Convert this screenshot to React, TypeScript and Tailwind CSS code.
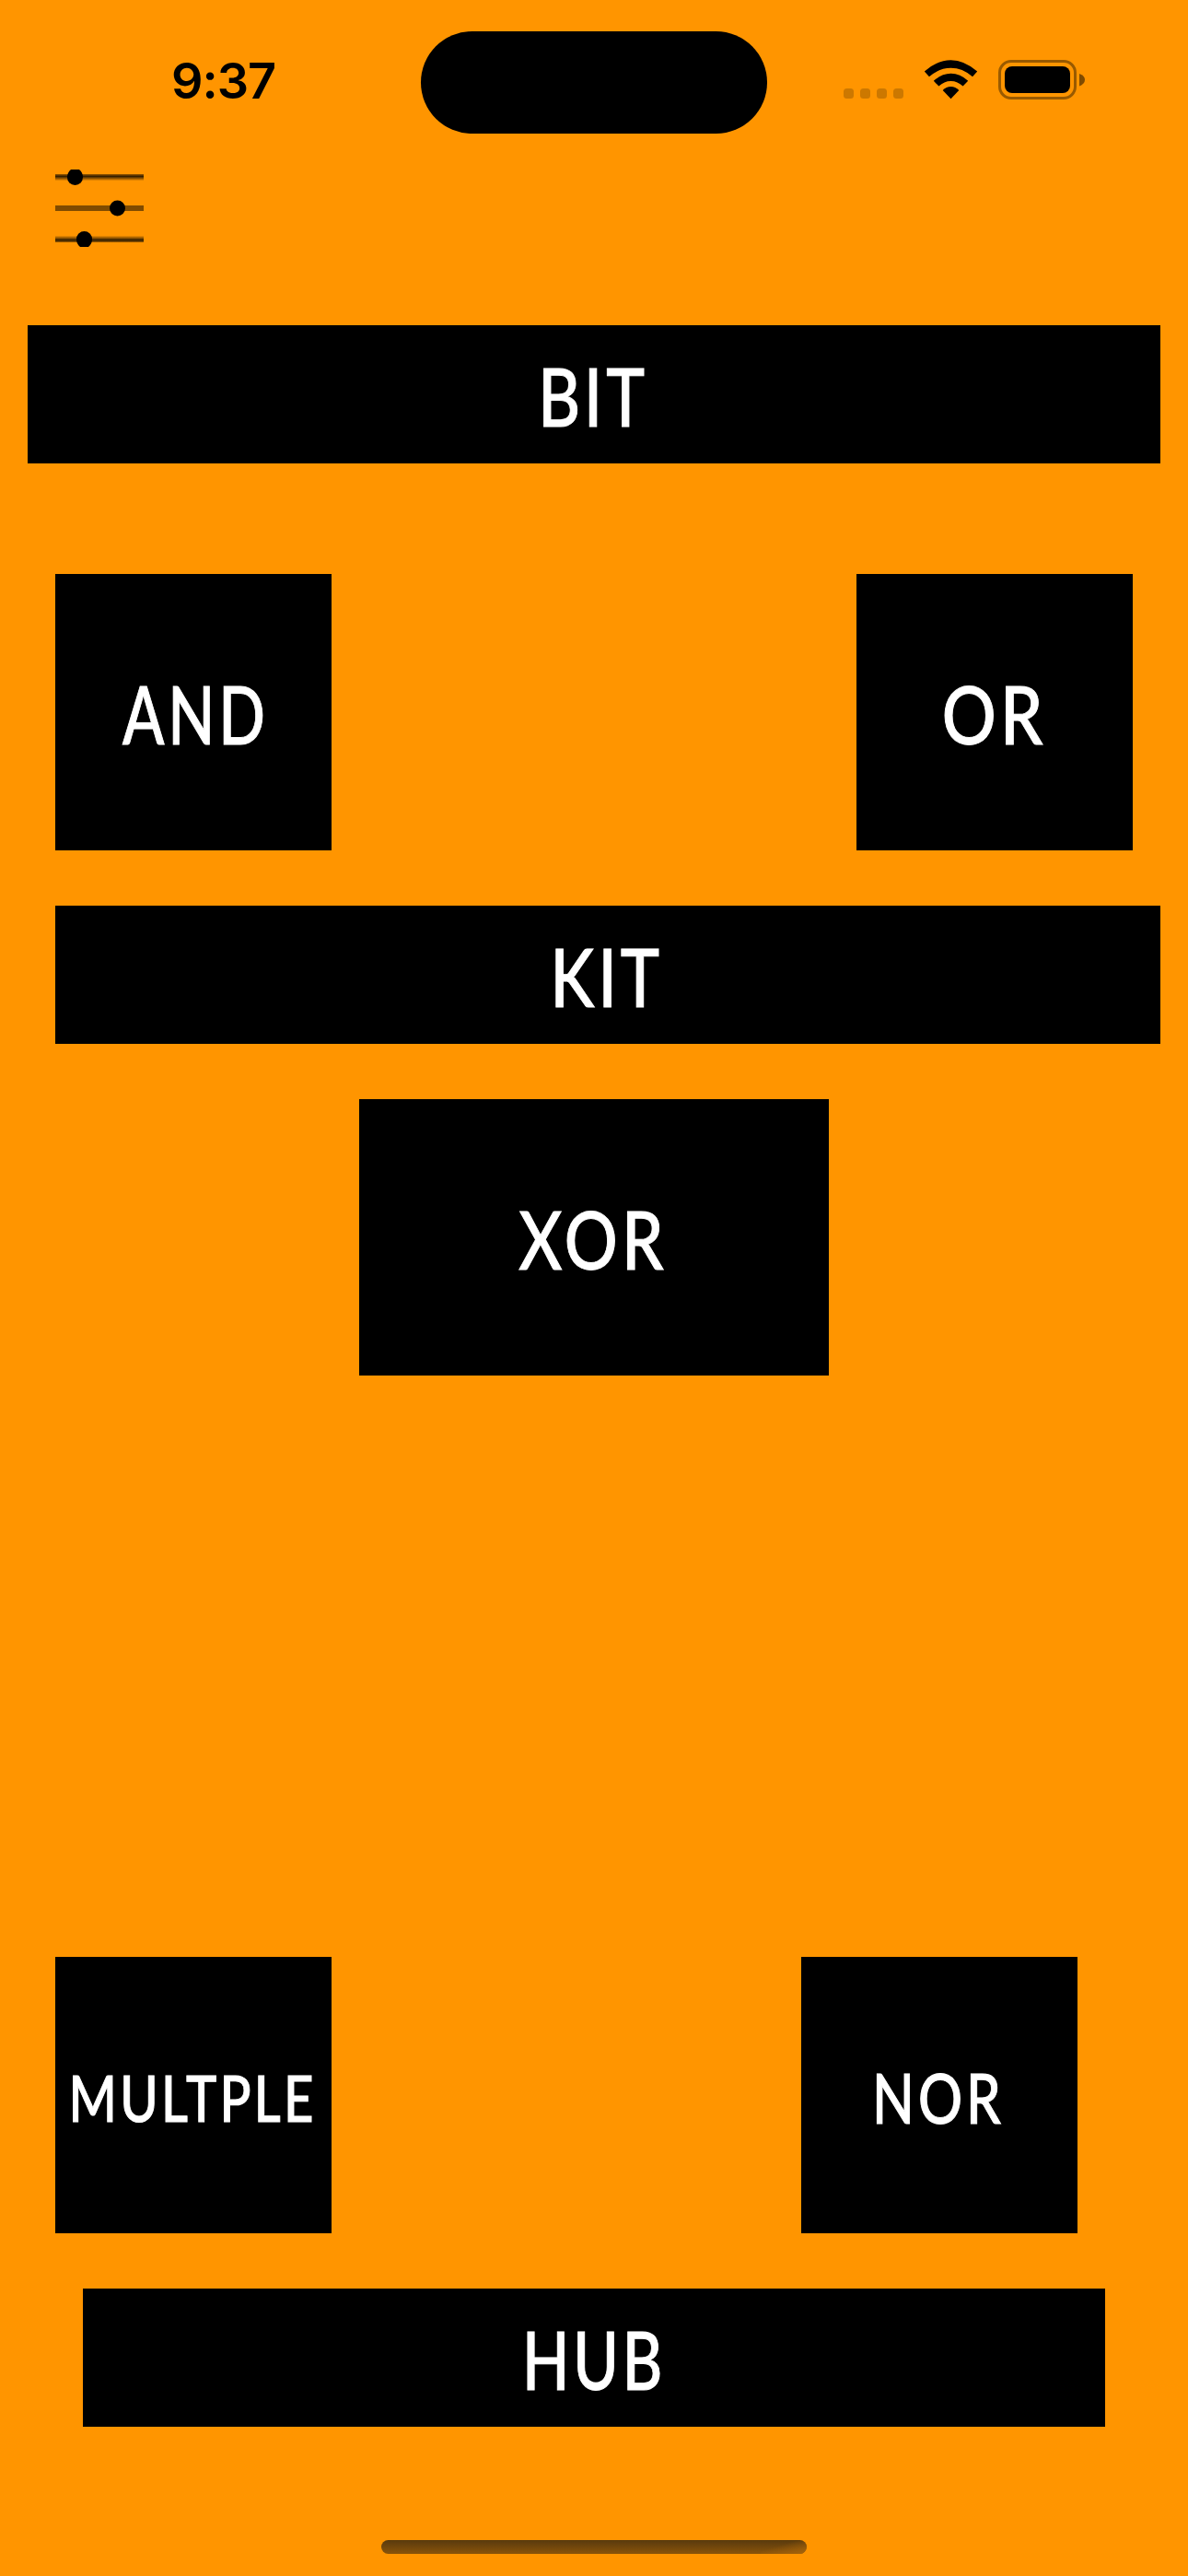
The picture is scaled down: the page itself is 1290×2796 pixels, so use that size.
const label =
  "whitespace-nowrap leading-none translate-y-[2px] [-webkit-text-stroke:1px_white]";

function StatusBar() {
  return (
    <header className="flex h-[178px] items-start">
      <div className="w-[457px] pt-[62px] pl-[186px] font-['Inter'] text-[54px] leading-[52px] font-semibold tracking-[-1px]">9:37</div>
      <div className="mt-[33.5px] h-[111px] w-[376px] rounded-full bg-black" />
      <svg className="mt-[40px] ml-[47px] h-[100px] w-[320px]" viewBox="0 0 320 100">
        <g fill="#cc7800">
          <rect x="36" y="56" width="11" height="11" rx="3.5" />
          <rect x="54" y="56" width="11" height="11" rx="3.5" />
          <rect x="72" y="56" width="11" height="11" rx="3.5" />
          <rect x="90" y="56" width="11" height="11" rx="3.5" />
        </g>
        <path d="M123.800 37.500 Q138 25.200 152.500 25.200 Q167 25.200 181.200 37.500 L176 43.200 Q165 33.800 152.500 33.800 Q140 33.800 129 43.200 Z" />
        <path d="M133.800 47.800 Q142.500 39.800 152.500 39.800 Q162.500 39.800 171.200 47.800 L165.600 53.600 Q159.800 48 152.500 48 Q145.200 48 139.400 53.600 Z" />
        <path d="M143.700 58 Q147.500 54 152.500 54 Q157.500 54 161.300 58 L152.500 67.200 Z" />
        <rect x="205.500" y="26.500" width="82" height="40" rx="12.500" fill="none" stroke="#995a00" strokeWidth="3" />
        <rect x="211" y="32" width="71" height="29" rx="8" />
        <path d="M292 40 Q298 42 298 46.500 Q298 51 292 53.500 Z" fill="#804b00" />
      </svg>
    </header>
  );
}

function SlidersIcon() {
  return (
    <svg className="ml-[60px] h-[90px] w-[96px] shrink-0" viewBox="0 0 96 90">
      <defs>
        <linearGradient id="fadeDown" x1="0" y1="0" x2="0" y2="1">
          <stop offset="0" stopColor="#000" stopOpacity="0.4" />
          <stop offset="0.35" stopColor="#000" stopOpacity="0.8" />
          <stop offset="1" stopColor="#000" stopOpacity="0.05" />
        </linearGradient>
        <linearGradient id="fadeUp" x1="0" y1="1" x2="0" y2="0">
          <stop offset="0" stopColor="#000" stopOpacity="0.4" />
          <stop offset="0.35" stopColor="#000" stopOpacity="0.8" />
          <stop offset="1" stopColor="#000" stopOpacity="0.05" />
        </linearGradient>
      </defs>
      <rect x="0" y="11" width="96" height="7" fill="url(#fadeDown)" />
      <rect x="0" y="45" width="96" height="6" fill="#804b00" />
      <rect x="0" y="78" width="96" height="7" fill="url(#fadeUp)" />
      <path d="M17 6H26Q30 9 30 14.500A8.500 8.500 0 0 1 13 14.500Q13 9 17 6Z" />
      <circle cx="67.500" cy="48" r="8.500" />
      <path d="M27 90H36Q40 87 40 81.500A8.500 8.500 0 0 0 23 81.500Q23 87 27 90Z" />
    </svg>
  );
}

export default function App() {
  return (
    <div className="flex h-[2796px] w-[1290px] flex-col bg-[#ff9500] font-['Lato',sans-serif] text-[86px] font-medium text-black">
      <StatusBar />
      <SlidersIcon />
      <main className="flex grow flex-col pt-[85px] tracking-[5px] text-white">
        <section className="mx-[30px] flex h-[150px] items-center justify-center bg-black">
          <span className={`${label} -translate-x-[1px] scale-x-[0.82]`}>BIT</span>
        </section>
        <div className="mx-[60px] mt-[120px] flex justify-between">
          <section className="flex size-[300px] items-center justify-center bg-black">
            <span className={`${label} translate-x-[2px] scale-x-[0.775]`}>AND</span>
          </section>
          <section className="flex size-[300px] items-center justify-center bg-black">
            <span className={`${label} translate-x-0 scale-x-[0.855]`}>OR</span>
          </section>
        </div>
        <section className="mt-[60px] mr-[30px] ml-[60px] flex h-[150px] items-center justify-center bg-black">
          <span className={`${label} -translate-x-[1px] scale-x-[0.83]`}>KIT</span>
        </section>
        <section className="mx-[390px] mt-[60px] flex h-[300px] items-center justify-center bg-black">
          <span className={`${label} -translate-x-[1px] scale-x-[0.84]`}>XOR</span>
        </section>
        <div className="mt-auto mr-[120px] ml-[60px] flex justify-between">
          <section className="flex size-[300px] items-center justify-center bg-black">
            <span className={`${label} -translate-x-[1px] scale-x-[0.815] text-[69px] tracking-[4px]`}>MULTPLE</span>
          </section>
          <section className="flex size-[300px] items-center justify-center bg-black">
            <span className={`${label} -translate-x-[1px] scale-x-[0.8] text-[75px]`}>NOR</span>
          </section>
        </div>
        <section className="mx-[90px] mt-[60px] flex h-[150px] items-center justify-center bg-black">
          <span className={`${label} translate-x-0 scale-x-[0.78]`}>HUB</span>
        </section>
      </main>
      <footer className="flex h-[162px] items-end justify-center pb-[24px]">
        <div className="flex h-[15px] w-[462px] justify-end overflow-hidden rounded-full bg-linear-to-b from-[#593a0d] to-[#8a5409]">
          <div className="h-full w-[50px] bg-linear-to-br from-transparent from-40% to-[#a8640a]" />
        </div>
      </footer>
    </div>
  );
}
